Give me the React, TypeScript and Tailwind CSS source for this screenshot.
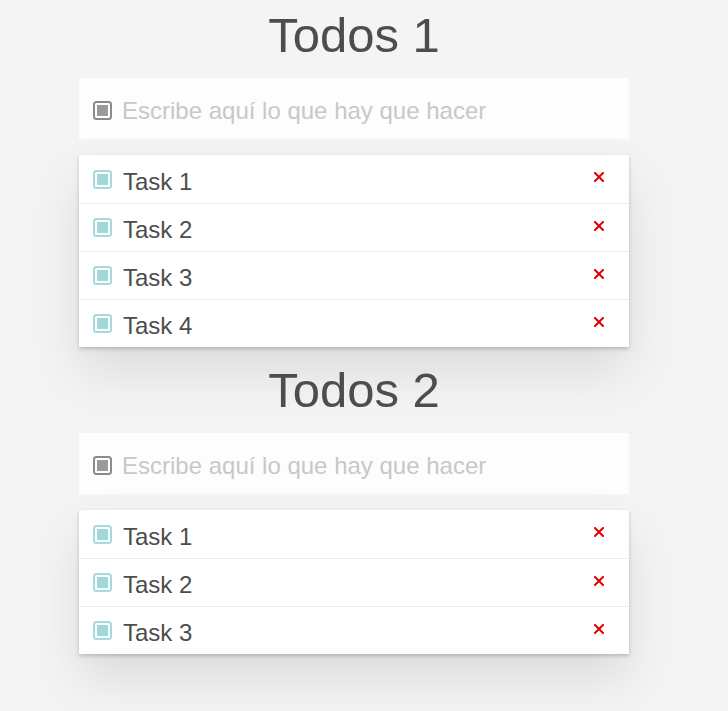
import React, { useState } from 'react';

interface Todo {
  id: number;
  text: string;
}

function Box({ tone }: { tone: 'gray' | 'teal' }) {
  const edge = tone === 'gray' ? '#8a8a8a' : '#a6dadd';
  const fill = tone === 'gray' ? '#9a9a9a' : '#a0d7db';
  return (
    <svg width="19" height="19" viewBox="0 0 19 19" className="shrink-0">
      <rect x="1" y="1" width="17" height="17" rx="2.5" fill="#fff" stroke={edge} strokeWidth="2" />
      <rect x="4" y="4" width="11" height="11" fill={fill} />
    </svg>
  );
}

function Cross() {
  return (
    <svg width="10" height="10" viewBox="0 0 10 10">
      <path d="M1 1L9 9M9 1L1 9" stroke="#e30000" strokeWidth="2" strokeLinecap="square" />
    </svg>
  );
}

function TodoList({ title, initial, first }: { title: string; initial: Todo[]; first?: boolean }) {
  const [todos, setTodos] = useState<Todo[]>(initial);

  return (
    <section className={first ? '' : 'mt-2'}>
      <h1 className="text-center text-[49px] leading-[71px] text-[#4d4d4d]">{title}</h1>
      <div className="mt-[7px] flex h-[63px] items-center gap-[10px] bg-[#fdfdfd] px-[14px] pt-[2px] shadow-[inset_0_-2px_1px_rgba(0,0,0,0.03)]">
        <Box tone="gray" />
        <input
          className="w-full bg-transparent text-[24px] text-[#4d4d4d] outline-none placeholder:text-[#c8c8c8]"
          placeholder="Escribe aquí lo que hay que hacer"
        />
      </div>
      <ul className="mt-[14px] bg-white shadow-[0_2px_4px_0_rgba(0,0,0,0.2),0_25px_50px_0_rgba(0,0,0,0.1)]">
        {todos.map((t, i) => (
          <li
            key={t.id}
            className={`flex h-[48px] items-center gap-[11px] pl-[14px] pr-[25px] ${i > 0 ? 'border-t border-[#ededed]' : ''}`}
          >
            <Box tone="teal" />
            <span className="flex-1 pt-[5px] text-[24px] text-[#4d4d4d]">{t.text}</span>
            <button onClick={() => setTodos(todos.filter((x) => x.id !== t.id))} className="-mt-[4px]">
              <Cross />
            </button>
          </li>
        ))}
      </ul>
    </section>
  );
}

export default function App() {
  return (
    <div className="min-h-screen bg-[#f4f4f4] font-['Liberation_Sans',Arial,sans-serif]">
      <div className="w-[708px]">
        <div className="mx-auto w-[550px]">
          <TodoList
            title="Todos 1"
            first
            initial={[
              { id: 1, text: 'Task 1' },
              { id: 2, text: 'Task 2' },
              { id: 3, text: 'Task 3' },
              { id: 4, text: 'Task 4' },
            ]}
          />
          <TodoList
            title="Todos 2"
            initial={[
              { id: 1, text: 'Task 1' },
              { id: 2, text: 'Task 2' },
              { id: 3, text: 'Task 3' },
            ]}
          />
        </div>
      </div>
    </div>
  );
}
